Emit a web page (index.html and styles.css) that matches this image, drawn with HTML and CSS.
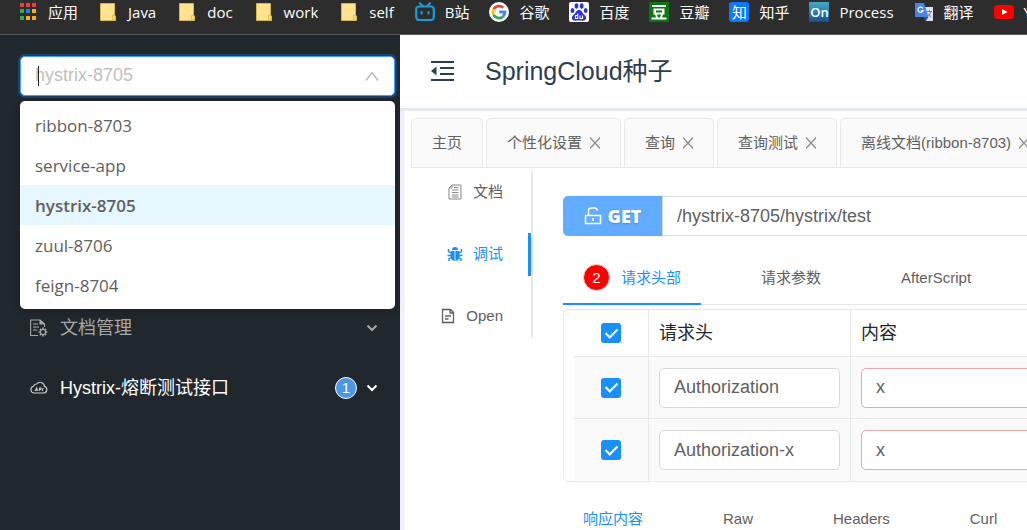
FILE: index.html
```html
<!DOCTYPE html>
<html lang="zh-CN">
<head>
<meta charset="utf-8">
<title>SpringCloud种子</title>
<link rel="stylesheet" href="styles.css">
</head>
<body>
<svg class="defs" aria-hidden="true">
  <symbol id="folder" viewBox="0 0 20 20"><path d="M2.500 1.500h14v12l1 .5v4.500h-15z" fill="#ffe391" stroke="#d9b44a"/><path d="M14.500 18v-4.500h2.500v4.500z" fill="#ffe391" stroke="#e8bf45"/></symbol>
  <symbol id="close" viewBox="0 0 10 12"><path d="M0 .5l10 11M10 .5L0 11.500" fill="none" stroke="currentColor" stroke-width="1.200"/></symbol>
  <symbol id="chevron" viewBox="0 0 12 12"><path d="M1.500 3.500L6 8l4.500-4.500" fill="none" stroke="currentColor" stroke-width="2"/></symbol>
</svg>
<div class="page">
  <nav class="bookmarks" aria-label="书签">
    <a href="#"><svg class="fav" viewBox="0 0 20 20"><path fill="#ea4335" d="M2 1h4v4H2zM8 1h4v4H8zM14 1h4v4h-4z"/><path fill="#34a853" d="M2 7h4v4H2zM2 14h4v4H2z"/><path fill="#1a82f0" d="M8 7h4v4H8z"/><path fill="#fbae05" d="M14 7h4v4h-4zM8 14h4v4H8zM14 14h4v4h-4z"/></svg>应用</a>
    <a href="#" class="folder"><svg class="fav"><use href="#folder"/></svg>Java</a>
    <a href="#" class="folder"><svg class="fav"><use href="#folder"/></svg>doc</a>
    <a href="#" class="folder"><svg class="fav"><use href="#folder"/></svg>work</a>
    <a href="#" class="folder"><svg class="fav"><use href="#folder"/></svg>self</a>
    <a href="#"><svg class="fav" viewBox="0 0 20 20"><g fill="none" stroke="#149fd9" stroke-width="2.200" stroke-linecap="round"><rect x="1.200" y="4.500" width="17.600" height="13.500" rx="3"/><path d="M5 1.200l2.500 2.800M15 1.200L12.500 4M6.500 10v1.500M13.500 10v1.500"/></g></svg>B站</a>
    <a href="#"><svg class="fav" viewBox="0 0 20 20"><circle cx="10" cy="10" r="10" fill="#fff"/><g fill="none" stroke-width="2.800"><path d="M14.200 5.800A6 6 0 0 0 4.700 7.200" stroke="#ea4335"/><path d="M4.700 7.200a6 6 0 0 0 0 5.600" stroke="#fbbc05"/><path d="M4.700 12.800a6 6 0 0 0 9 2" stroke="#34a853"/><path d="M13.700 14.800A6 6 0 0 0 16 10h-5.800" stroke="#4285f4"/></g></svg>谷歌</a>
    <a href="#"><svg class="fav" viewBox="0 0 20 20"><rect width="20" height="20" rx="2" fill="#fff"/><g fill="#2a32de"><ellipse cx="7.500" cy="4" rx="1.900" ry="2.800"/><ellipse cx="12.700" cy="4" rx="1.900" ry="2.800"/><ellipse cx="3.500" cy="8.500" rx="1.900" ry="2.500"/><ellipse cx="16.700" cy="8.500" rx="1.900" ry="2.500"/><path d="M10 8c2.500 0 3 2.500 4.500 4s3 2.500 2.500 4.500-2.500 2.500-4.500 2h-5c-2 .5-4 0-4.500-2S4 13.500 5.500 12 7.500 8 10 8z"/></g><path d="M8.700 11.500v5H6.500v-3h2.200M11 13.500v3h2.500v-3" fill="none" stroke="#fff" stroke-width="1.100"/></svg>百度</a>
    <a href="#"><svg class="fav" viewBox="0 0 20 20"><rect width="20" height="20" rx="1" fill="#08780f"/><path d="M3 3h14v2H3zM4.500 6.500h11v6h-11zM7 8.500v2h6v-2zM2.500 15.500h15v2h-15zM6 12.500h2l1 3H7zM12 12.500h2l-1 3h-2z" fill="#fff" fill-rule="evenodd"/></svg>豆瓣</a>
    <a href="#"><span class="fav tile tile-zhi">知</span>知乎</a>
    <a href="#"><span class="fav tile tile-on">On</span>Process</a>
    <a href="#"><svg class="fav" viewBox="0 0 20 20"><path d="M8 5h11v14h-7z" fill="#dfe2e6"/><path d="M1 1h9l4.500 14H1z" fill="#4b84e8"/><path d="M9.500 15h5L12 19z" fill="#2b56b0"/><path d="M8.800 6.300a2.600 2.600 0 1 0 .3 2.200H6.800" fill="none" stroke="#fff" stroke-width="1.200"/><path d="M12.500 9.500H18M15.500 8v1.500M17 9.500c-.5 2.500-2 4-3.500 5M14 11.500c1 1.500 2 2.500 3.500 3.500" fill="none" stroke="#7a8590"/></svg>翻译</a>
    <a href="#"><svg class="fav" viewBox="0 0 20 20"><rect y="3" width="20" height="14" rx="3.500" fill="#f00"/><path d="M8 7l5.500 3L8 13z" fill="#fff"/></svg>YouTube</a>
  </nav>
  <div class="app">
    <aside class="sidebar">
      <div class="service">
        <input class="service-input" type="text" role="combobox" aria-expanded="true" aria-controls="services" aria-label="服务" placeholder="hystrix-8705">
        <span class="caret"></span>
        <svg class="service-arrow" viewBox="0 0 14 14"><path d="M1 11.500l6-8 6 8" fill="none" stroke="#b5b5b5" stroke-width="1.300"/></svg>
        <ul class="options" id="services" role="listbox">
          <li role="option">ribbon-8703</li>
          <li role="option">service-app</li>
          <li role="option" class="chosen" aria-selected="true">hystrix-8705</li>
          <li role="option">zuul-8706</li>
          <li role="option">feign-8704</li>
        </ul>
      </div>
      <nav class="menu" aria-label="菜单">
        <button class="menu-item" type="button">
          <svg class="menu-icon" viewBox="0 0 18 18"><g fill="none" stroke="currentColor" stroke-width="1.100"><path d="M8 16.500H.600V1H10v4h4.500v3M10 1l4.500 4M3 5h5M3 8h6M3 11h4.500"/><circle cx="13" cy="13" r="2.600"/><path stroke-width="1.600" d="M13 8.600v1.600M13 15.800v1.600M8.600 13h1.600M15.800 13h1.600M9.900 9.900l1 1M15.100 15.100l1 1M9.900 16.100l1-1M15.100 10.900l1-1"/></g><path d="M10 1v4h4.500z" fill="currentColor"/></svg>
          <span class="menu-label">文档管理</span>
          <svg class="chevron"><use href="#chevron"/></svg>
        </button>
        <button class="menu-item open" type="button">
          <svg class="menu-icon" viewBox="0 0 18 18"><path d="M4.200 14a3.400 3.400 0 0 1-.7-6.700 3 3 0 0 1 3.200-2.300 4.300 4.300 0 0 1 7.700 2.400 3.400 3.400 0 0 1-.4 6.600zM5 12l1.700-3 .7 3M5.700 11h1.400M9 12l.7-3h1.300q.8 1.500-1.600 1.500M12.300 12l.7-3" fill="none" stroke="#ccd0d3" stroke-width="1.100"/></svg>
          <span class="menu-label">Hystrix-熔断测试接口</span>
          <span class="count">1</span>
          <svg class="chevron"><use href="#chevron"/></svg>
        </button>
      </nav>
    </aside>
    <main class="main">
      <header class="header">
        <button class="fold" type="button" aria-label="收起菜单"><svg viewBox="0 0 24 24"><path d="M0 3h23M9 9h14M9 15h14M0 21h23" fill="none" stroke="#2c3e50" stroke-width="2"/><path d="M0 12l5.500-4.500v9z" fill="#2c3e50"/></svg></button>
        <h1>SpringCloud种子</h1>
      </header>
      <div class="workspace">
        <div class="tabs">
          <button type="button">主页</button>
          <button type="button">个性化设置<svg><use href="#close"/></svg></button>
          <button type="button">查询<svg><use href="#close"/></svg></button>
          <button type="button">查询测试<svg><use href="#close"/></svg></button>
          <button type="button">离线文档(ribbon-8703)<svg><use href="#close"/></svg></button>
        </div>
        <div class="body">
          <nav class="views" aria-label="视图">
            <button type="button"><svg viewBox="0 0 16 16"><path d="M5 1h9v14H2V4zM5 1v3H2M5 6h6.500M5 8.500h6.500M5 11h6.500M7 3.500h4.500M5 13h6.500" fill="none" stroke="#888"/></svg>文档</button>
            <button type="button" class="current"><svg viewBox="0 0 16 16"><path d="M5 4a3 3 0 0 1 6 0zM3.500 5H7.600v10C5 14.500 3.500 13 3.500 10zM8.400 5h4.100v5c0 3-1.500 4.500-4.100 5z" fill="currentColor"/><path d="M1.500 3v2.500L4 7M.500 9.500H4M2 15v-2l2.500-1.500M14.500 3v2.500L12 7M15.500 9.500H12M14 15v-2l-2.500-1.500" fill="none" stroke="currentColor" stroke-width="1.400"/></svg>调试</button>
            <button type="button"><svg viewBox="0 0 16 16"><path d="M2.500 1.500h8l3 3v10h-11zM10 1.500V5h3.500M5 8h6M5 11h3.500" fill="none" stroke="currentColor" stroke-width="1.300"/></svg>Open</button>
          </nav>
          <section class="debug">
            <div class="request">
              <button class="method" type="button"><svg viewBox="0 0 18 18"><path d="M1.500 8.500h15v8h-15zM4.500 8.500v-5q0-2.500 2.500-2.500h3.500q2.500 0 3 2.500M9 11v3" fill="none" stroke="#fff" stroke-width="1.500"/></svg>GET</button>
              <input class="url" type="text" aria-label="请求地址" value="/hystrix-8705/hystrix/test">
            </div>
            <div class="subtabs">
              <button type="button" class="current"><span class="badge">2</span>请求头部</button>
              <button type="button">请求参数</button>
              <button type="button">AfterScript</button>
            </div>
            <div class="table-box">
              <table>
                <thead>
                  <tr><th class="pick"><input type="checkbox" checked aria-label="全选"></th><th class="name">请求头</th><th>内容</th></tr>
                </thead>
                <tbody>
                  <tr><td class="pick"><input type="checkbox" checked aria-label="选择 Authorization"></td><td><input class="field" type="text" aria-label="请求头" value="Authorization"></td><td><input class="field warn" type="text" aria-label="内容" value="x"></td></tr>
                  <tr><td class="pick"><input type="checkbox" checked aria-label="选择 Authorization-x"></td><td><input class="field" type="text" aria-label="请求头" value="Authorization-x"></td><td><input class="field warn" type="text" aria-label="内容" value="x"></td></tr>
                </tbody>
              </table>
            </div>
            <div class="subtabs response">
              <button type="button" class="current">响应内容</button>
              <button type="button">Raw</button>
              <button type="button">Headers</button>
              <button type="button">Curl</button>
            </div>
          </section>
        </div>
      </div>
    </main>
  </div>
</div>
</body>
</html>
```

FILE: styles.css
```css
*, ::before { box-sizing: border-box; }

body {
  margin: 0;
  font: 15px/24px "Liberation Sans", "Noto Sans CJK SC", sans-serif;
  color: #606060;
}

button, input {
  font: inherit;
  color: inherit;
}

button {
  padding: 0;
  border: 0;
  background: none;
  white-space: nowrap;
}

svg { display: block; flex: none; }

.defs { position: absolute; width: 0; height: 0; }

.page {
  display: flex;
  flex-direction: column;
  height: 100vh;
  overflow: hidden;
}

/* Bookmarks */
.bookmarks {
  display: flex;
  flex: none;
  gap: 20px;
  padding: 0 18px 10px;
  background: #2d2d2d;
  border-bottom: 1px solid #5a5a5a;
  font-family: "Open Sans", "Noto Sans CJK SC", sans-serif;
}

.bookmarks a {
  display: flex;
  flex: none;
  align-items: center;
  gap: 10px;
  color: #fff;
  text-decoration: none;
}

.bookmarks .folder { padding-right: 1px; }

.fav { width: 20px; height: 20px; }

.tile {
  color: #fff;
  line-height: 20px;
  text-align: center;
}

.tile-zhi { background: #0a78ff; border-radius: 3px; }

.tile-on {
  background: linear-gradient(#45a9c4, #15508f);
  font-size: 13px;
  font-weight: 600;
}

/* Sidebar */
.app { display: flex; flex: 1; min-height: 0; }

.sidebar {
  flex: none;
  width: 400px;
  padding-top: 21px;
  background: #20272d;
}

.service { position: relative; margin: 0 5px 0 20px; }

.service-input {
  display: block;
  width: 100%;
  height: 40px;
  padding: 0 14px 2px;
  border: 1px solid #40a0f8;
  border-radius: 5px;
  outline: 0;
  box-shadow: 0 0 0 2px #1c4469;
  background: #fff;
  font-size: 18px;
}

.service-input::placeholder { color: #bfbfbf; opacity: 1; }

.caret {
  position: absolute;
  top: 10px;
  left: 18px;
  width: 1px;
  height: 20px;
  background: #222;
}

.service-arrow {
  position: absolute;
  top: 13px;
  right: 16px;
  width: 14px;
  height: 14px;
}

.options {
  position: absolute;
  top: 45px;
  right: 0;
  left: 0;
  z-index: 1;
  margin: 0;
  padding: 4px 0;
  border-radius: 5px;
  background: #fff;
  box-shadow: 0 2px 10px rgba(0, 0, 0, .15);
  list-style: none;
  font: 17px/38px "Open Sans", sans-serif;
}

.options li { padding: 2px 15px 0; }

.options .chosen { background: #e6f7ff; font-weight: 600; }

.menu { padding-top: 202px; }

.menu-item {
  display: flex;
  align-items: center;
  width: 100%;
  height: 60px;
  padding: 0 22px 0 30px;
  color: #a6a9ab;
  font-size: 18px;
  text-align: left;
}

.menu-item.open { color: #fff; }

.menu-icon { width: 18px; height: 18px; margin-right: 12px; }

.menu-label { flex: 1; }

.chevron { width: 12px; height: 12px; }

.count {
  width: 22px;
  height: 22px;
  margin-right: 9px;
  border: 1px solid #fff;
  border-radius: 50%;
  background: #4b96e6;
  font-size: 15px;
  line-height: 20px;
  text-align: center;
}

/* Main area */
.main {
  display: flex;
  flex: 1;
  flex-direction: column;
  min-width: 0;
  overflow: hidden;
  background: #fff;
}

.header {
  display: flex;
  flex: none;
  align-items: center;
  gap: 30px;
  height: 76px;
  padding: 0 0 2px 31px;
  border-bottom: 3px solid #e6e9ee;
}

.fold svg { width: 24px; height: 24px; }

h1 {
  margin: 0;
  color: #2c3e50;
  font-size: 25px;
  font-weight: 400;
}

.workspace {
  flex: 1;
  min-height: 0;
  padding: 7px 0 0 6px;
  border-left: 5px solid #f0f2f5;
}

.tabs {
  display: flex;
  gap: 3px;
  border-bottom: 1px solid #e8e8e8;
}

.tabs button {
  display: flex;
  flex: none;
  align-items: center;
  gap: 8px;
  height: 49px;
  padding: 0 20px;
  border: 1px solid #e8e8e8;
  border-bottom: 0;
  border-radius: 5px 5px 0 0;
  background: #fafafa;
}

.tabs svg { width: 10px; height: 12px; color: #8c8c8c; }

.body { display: flex; align-items: flex-start; }

.views {
  display: flex;
  flex: none;
  flex-direction: column;
  gap: 19px;
  width: 122px;
  margin-top: 3px;
  border-right: 2px solid #e8e8e8;
}

.views button {
  display: flex;
  align-items: center;
  justify-content: flex-end;
  gap: 10px;
  height: 43px;
  padding: 0 25px 2px 0;
  border-right: 3px solid transparent;
}

.views svg { width: 16px; height: 16px; }

.views .current { border-color: #1890ff; color: #1890ff; }

/* Request form */
.debug {
  flex: 1 0 auto;
  min-width: 560px;
  padding: 28px 0 0 30px;
}

.request { display: flex; height: 40px; }

.method {
  display: flex;
  align-items: center;
  justify-content: center;
  gap: 6px;
  width: 99px;
  border-radius: 5px 0 0 5px;
  background: #62acff;
  color: #fff;
  font-family: "Open Sans", sans-serif;
  font-size: 18px;
  font-weight: 800;
  text-shadow: 0 1px 2px rgba(0, 0, 0, .2);
}

.method svg { width: 18px; height: 18px; }

.url {
  flex: 1;
  padding: 0 14px;
  border: 1px solid #d9d9d9;
  font-size: 18px;
}

.subtabs {
  display: flex;
  gap: 40px;
  margin-top: 16px;
  border-bottom: 1px solid #e8e8e8;
}

.subtabs button {
  display: flex;
  align-items: center;
  gap: 11px;
  height: 53px;
  margin-bottom: -1px;
  padding: 0 20px;
  border-bottom: 2px solid transparent;
}

.subtabs .current { border-color: #1890ff; color: #1890ff; }

.badge {
  width: 27px;
  height: 27px;
  border: 1px solid #ddd;
  border-radius: 50%;
  background: #f00;
  color: #fff;
  line-height: 25px;
}

.table-box {
  margin-top: 4px;
  padding-left: 10px;
  border: 1px solid #e8e8e8;
  border-radius: 5px;
}

table {
  width: 100%;
  border-collapse: separate;
  border-spacing: 0;
  font-size: 18px;
  table-layout: fixed;
}

th, td {
  height: 62px;
  padding: 0 10px;
  border-right: 1px solid #e8e8e8;
  border-bottom: 1px solid #e8e8e8;
  text-align: left;
}

th {
  height: 47px;
  color: #262626;
  font-weight: 400;
}

tbody tr { background: #fafafa; }

tbody tr:last-child td { border-bottom: 0; }

.pick { width: 75px; text-align: center; }

.name { width: 202px; }

input[type="checkbox"] {
  display: grid;
  place-content: center;
  width: 20px;
  height: 20px;
  margin: 0 auto;
  border-radius: 3px;
  background: #1890ff;
  appearance: none;
}

input[type="checkbox"]::before {
  content: "";
  width: 7px;
  height: 12px;
  margin-bottom: 3px;
  border: solid #fff;
  border-width: 0 2px 2px 0;
  transform: rotate(45deg);
}

.field {
  display: block;
  width: 100%;
  height: 40px;
  padding: 0 14px;
  border: 1px solid #d9d9d9;
  border-radius: 5px;
  background: #fff;
}

.warn { border-color: #e9a9a9; }

.response { margin-top: 11px; }
```
